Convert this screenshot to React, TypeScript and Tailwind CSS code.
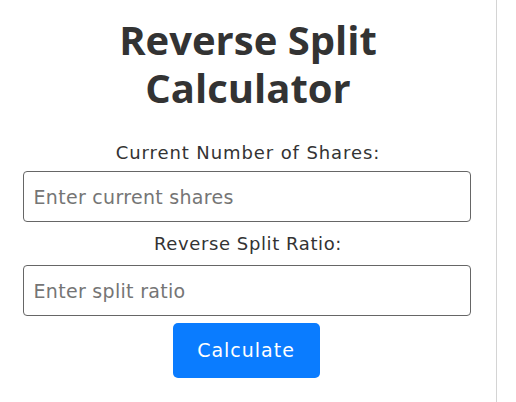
export default function App() {
  return (
    <div className="h-[402px] w-[516px] bg-white">
      <div className="h-full w-[497px] border-r border-[#d4d4d4] flex flex-col items-center pt-[16px] text-[#333] font-['DejaVu_Sans',sans-serif]">
        <h1 className="text-[40px] font-bold leading-[48px] text-center font-['Open_Sans',sans-serif]">
          Reverse Split
          <br />
          Calculator
        </h1>
        <label className="mt-[27px] text-[18px] leading-[27px] tracking-[0.9px] text-[#333]">Current Number of Shares:</label>
        <input
          className="mt-[5px] h-[51px] w-[448px] ml-[-3px] rounded-[4px] border border-[#666] px-[10px] text-[19px] tracking-[0.3px] placeholder:text-[#757575] outline-none"
          placeholder="Enter current shares"
        />
        <label className="mt-[8px] text-[18px] leading-[27px] tracking-[0.6px] text-[#333]">Reverse Split Ratio:</label>
        <input
          className="mt-[8px] h-[51px] w-[448px] ml-[-3px] rounded-[4px] border border-[#666] px-[10px] text-[19px] tracking-[0.3px] placeholder:text-[#757575] outline-none"
          placeholder="Enter split ratio"
        />
        <button className="mt-[7px] h-[55px] w-[147px] ml-[-4px] rounded-[5px] bg-[#0a7cff] text-[19px] tracking-[1px] text-white">
          Calculate
        </button>
      </div>
    </div>
  )
}
